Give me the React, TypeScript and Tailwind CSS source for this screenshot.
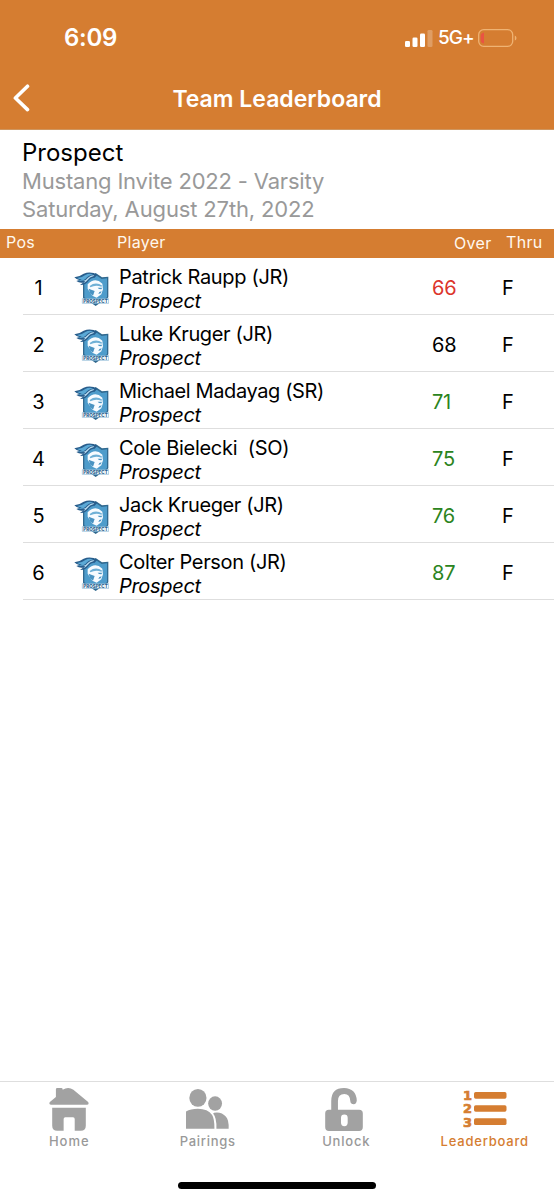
const players = [
  { pos: 1, name: 'Patrick Raupp (JR)', score: 66, color: 'text-[#dc352c]', nameStyle: 'tracking-[-0.34px]' },
  { pos: 2, name: 'Luke Kruger (JR)', score: 68, color: 'text-black', nameStyle: 'tracking-[-0.36px]' },
  { pos: 3, name: 'Michael Madayag (SR)', score: 71, color: 'text-[#2b8420]', nameStyle: 'tracking-[-0.38px]' },
  { pos: 4, name: 'Cole Bielecki  (SO)', score: 75, color: 'text-[#2b8420]', nameStyle: 'tracking-[-0.3px]' },
  { pos: 5, name: 'Jack Krueger (JR)', score: 76, color: 'text-[#2b8420]', nameStyle: 'tracking-[-0.38px]' },
  { pos: 6, name: 'Colter Person (JR)', score: 87, color: 'text-[#2b8420]', nameStyle: 'tracking-[-0.34px]' },
];

function TeamLogo() {
  return (
    <svg viewBox="0 0 105 102" className="block h-[34px] w-[35px]">
      <path d="M27 26 L45 18 L65 3 L84 16 L103 14 V76 Q96 88 78 93 L65 102 L52 93 Q34 88 27 77 Z" fill="#31698f" />
      <path d="M31 30 L47 22 L65 9 L83 21 L99 19 V76 L65 96 L31 76 Z" fill="#4e9ccb" />
      <path d="M41 37 Q63 14 85 35 L87 52 L82 67 L68 77 L55 71 L49 62 L41 50 Z" fill="#f7fbff" />
      <path d="M47 42 Q65 28 85 41 L82 44 Q65 37 49 46 Z" fill="#6fb0d6" />
      <path d="M44 50 L62 57 L57 71 L48 63 Z M71 47 L85 47 L82 52 L75 51 Z M76 60 L83 58 L80 64 L73 66 Z" fill="#4a93c2" />
      <path d="M1 16 Q15 15 29 5 Q43 -1 59 3 L70 8 L62 17 Q50 16 45 25 Q38 39 18 39 L27 32 Q16 34 7 27 L16 24 Q7 23 1 16Z" fill="#285d8c" />
      <path d="M9 18 Q23 18 34 9 Q45 3 58 7 Q42 11 35 20 Q27 29 12 27 L26 22 Q17 23 9 18Z" fill="#5ba9d6" />
      <path d="M27 27 Q36 25 42 17 Q49 9 61 9 L58 13 Q47 15 41 24 Q35 32 27 34 L34 28Z" fill="#b9dcf0" />
      <path d="M25 80 H104 V94 H25Z" fill="#fff" stroke="#5c9cc5" strokeWidth="1.5" />
      <text x="28" y="92" textLength="73" lengthAdjust="spacingAndGlyphs" fontSize="13" fontWeight="800" fill="#285d8c" fontFamily="Inter, sans-serif">PROSPECT</text>
    </svg>
  );
}

function HomeIcon() {
  return (
    <svg viewBox="0 0 118 128" className="h-[43px] w-[40px]" fill="#a2a2a2">
      <path d="M20 19 V4 Q20 0 24 0 H36 Q40 0 40 4 V5 Q57 -5 72 5 L116 42 Q120 49 112 50 H5 Q-2 49 2 42 L20 27Z" />
      <path d="M9 59 H109 V112 Q109 127 94 127 H76 V92 Q76 87 71 87 H48 Q43 87 43 92 V127 H24 Q9 127 9 112Z" />
    </svg>
  );
}

function PairingsIcon() {
  return (
    <svg viewBox="0 0 130 121" className="h-[40px] w-[43px]" fill="#a2a2a2">
      <ellipse cx="36" cy="27" rx="26" ry="27" />
      <ellipse cx="88" cy="44" rx="21" ry="22" />
      <path d="M0 68 Q14 60 36 60 Q66 60 79 79 Q86 90 86 120 H0Z M85 72 Q107 68 121 84 Q130 94 129 120 H92 Q93 87 82 74Z" />
    </svg>
  );
}

function UnlockIcon() {
  return (
    <svg viewBox="0 0 112 128" className="mr-[4px] h-[43px] w-[38px]">
      <path fill="#a2a2a2" fillRule="evenodd" d="M18 65 V39 Q18 0 56 0 Q92 1 94 37 Q93 48 85 48 Q76 48 75 40 Q74 18 57 18 Q38 18 38 39 V65 H101 Q112 65 112 76 V116 Q112 128 101 128 H11 Q0 128 0 116 V76 Q0 65 11 65Z M57 79 Q47 79 47 89 V103 Q47 114 57 114 Q67 114 67 103 V89 Q67 79 57 79Z" />
    </svg>
  );
}

function LeaderboardIcon() {
  return (
    <svg viewBox="0 0 44 40" className="h-[40px] w-[44px]" fill="#d57d31">
      <g fontFamily="DejaVu Sans, sans-serif" fontSize="13" fontWeight="700" stroke="#d57d31" strokeWidth="0.7">
        <text x="0" y="11" textLength="9" lengthAdjust="spacingAndGlyphs">1</text>
        <text x="0" y="24.4" textLength="9" lengthAdjust="spacingAndGlyphs">2</text>
        <text x="0" y="37.8" textLength="9" lengthAdjust="spacingAndGlyphs">3</text>
      </g>
      <rect x="11" y="3" width="32.5" height="6.8" rx="1.7" />
      <rect x="11" y="16.2" width="32.5" height="6.6" rx="1.7" />
      <rect x="11" y="29.3" width="32.5" height="6.8" rx="1.7" />
    </svg>
  );
}

const tabs = [
  { label: 'Home', icon: <HomeIcon />, color: 'text-[#999]', pad: 'pt-[6px]', tracking: 'tracking-[1px]' },
  { label: 'Pairings', icon: <PairingsIcon />, color: 'text-[#999]', pad: 'pt-[7px]', tracking: 'tracking-[0.7px]' },
  { label: 'Unlock', icon: <UnlockIcon />, color: 'text-[#999]', pad: 'pt-[6px]', tracking: 'tracking-[0.8px]' },
  { label: 'Leaderboard', icon: <LeaderboardIcon />, color: 'text-[#d57d31]', pad: 'pt-[7px]', tracking: 'tracking-[0.8px]' },
];

export default function App() {
  return (
    <div className="flex h-[1200px] w-[554px] flex-col overflow-hidden bg-white font-['Inter',sans-serif] text-black">
      <header className="h-[130px] shrink-0 border-b border-[#cf965f] bg-[#d57d31] text-white">
        <div className="flex h-[67px] items-start justify-between pl-[64px] pr-[37px] pt-[23px]">
          <span className="text-[24px] font-semibold leading-[29px] tracking-[-0.3px]">6:09</span>
          <div className="flex h-[29px] items-center">
            <svg viewBox="0 0 28 18" className="h-[18px] w-[28px]" fill="white">
              <rect x="0" y="12" width="5" height="6" rx="1.3" />
              <rect x="7.5" y="8.5" width="5" height="9.5" rx="1.3" />
              <rect x="15" y="4.5" width="5" height="13.5" rx="1.3" />
              <rect x="22.5" y="1" width="5" height="17" rx="1.3" opacity="0.25" />
            </svg>
            <span className="ml-[5px] w-[35px] whitespace-nowrap pt-px text-[19px] font-medium leading-[28px] tracking-[-1px]">5G+</span>
            <svg viewBox="0 0 39 18" className="ml-[5px] h-[18px] w-[39px]">
              <rect x="0.7" y="0.7" width="34" height="16.6" rx="5" fill="none" stroke="#efb373" strokeWidth="1.3" />
              <path d="M6 3.5V14.5Q2.7 14 2.7 11V7Q2.7 4 6 3.5Z" fill="#e95443" />
              <path d="M36.8 6.5Q38.5 7 38.5 9T36.8 11.5Z" fill="#efb373" />
            </svg>
          </div>
        </div>
        <div className="grid h-[62px] grid-cols-[60px_1fr_60px] items-center">
          <svg viewBox="0 0 18 28" className="ml-[12px] h-[28px] w-[18px]" fill="none" stroke="white" strokeWidth="3.6" strokeLinecap="round" strokeLinejoin="round">
            <path d="M15.5 2.2L3.4 14L15.5 25.6" />
          </svg>
          <h1 className="pt-px text-center text-[23px] font-semibold leading-[28px]">Team Leaderboard</h1>
        </div>
      </header>

      <section className="h-[99px] shrink-0 whitespace-nowrap pl-[22px] pt-[8px]">
        <h2 className="text-[24px] leading-[29px]">Prospect</h2>
        <p className="text-[22px] leading-[28px] tracking-[-0.18px] text-[#999]">Mustang Invite 2022 - Varsity</p>
        <p className="text-[22px] leading-[28px] tracking-[-0.14px] text-[#999]">Saturday, August 27th, 2022</p>
      </section>

      <div className="grid h-[29px] shrink-0 grid-cols-[117px_337px_52px_1fr] bg-[#d57d31] text-[16px] leading-[27px] tracking-[0.3px] text-[#fff8ef]">
        <span className="pl-[6px]">Pos</span>
        <span>Player</span>
        <span className="pt-px">Over</span>
        <span>Thru</span>
      </div>

      <main className="flex-1">
        {players.map((player) => (
          <div key={player.pos} className="ml-[23px] grid h-[57px] grid-cols-[31px_20px_45px_300px_53px_1fr] items-center border-b border-[#dedede] text-[20px]">
            <span className="pt-[4px] text-center">{player.pos}</span>
            <span />
            <div className="pt-[5px]"><TeamLogo /></div>
            <div className="self-start whitespace-pre pt-[7px] leading-[24px]">
              <div className={player.nameStyle}>{player.name}</div>
              <div className="italic tracking-[-0.32px]">Prospect</div>
            </div>
            <span className={`pl-[13px] pt-[4px] tracking-[-0.2px] ${player.color}`}>{player.score}</span>
            <span className="pl-[30px] pt-[4px]">F</span>
          </div>
        ))}
      </main>

      <nav className="grid h-[119px] shrink-0 grid-cols-4 border-t border-[#dedede]">
        {tabs.map((tab) => (
          <div key={tab.label} className={`flex flex-col items-center ${tab.color}`}>
            <div className={`h-[51px] ${tab.pad}`}>{tab.icon}</div>
            <span className={`text-[13px] font-medium leading-[17px] ${tab.tracking}`}>{tab.label}</span>
          </div>
        ))}
        <div className="col-span-4 flex h-[18px] items-start justify-center self-end">
          <div className="h-[7px] w-[198px] rounded-full bg-black" />
        </div>
      </nav>
    </div>
  );
}
